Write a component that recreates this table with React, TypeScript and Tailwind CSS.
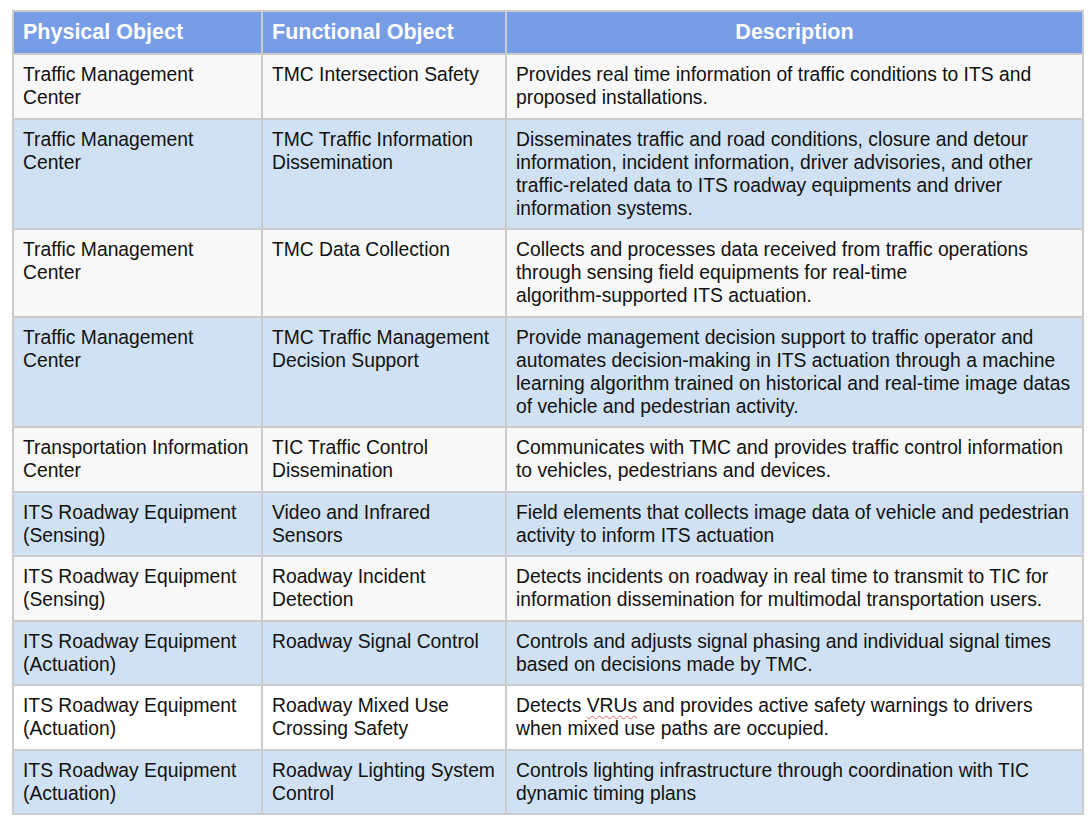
// Tableau des objets physiques / fonctionnels ITS

type Row = {
  physical: string[];
  functional: string[];
  description: React.ReactNode;
  tone: 'gray' | 'blue' | 'white';
};

const rows: Row[] = [
  {
    physical: ['Traffic Management', 'Center'],
    functional: ['TMC Intersection Safety'],
    description: 'Provides real time information of traffic conditions to ITS and proposed installations.',
    tone: 'gray',
  },
  {
    physical: ['Traffic Management', 'Center'],
    functional: ['TMC Traffic Information', 'Dissemination'],
    description:
      'Disseminates traffic and road conditions, closure and detour information, incident information, driver advisories, and other traffic-related data to ITS roadway equipments and driver information systems.',
    tone: 'blue',
  },
  {
    physical: ['Traffic Management', 'Center'],
    functional: ['TMC Data Collection'],
    description: (
      <>
        Collects and processes data received from traffic operations through sensing field equipments for real-time{' '}
        <span className="whitespace-nowrap">algorithm-supported</span> ITS actuation.
      </>
    ),
    tone: 'gray',
  },
  {
    physical: ['Traffic Management', 'Center'],
    functional: ['TMC Traffic Management', 'Decision Support'],
    description:
      'Provide management decision support to traffic operator and automates decision-making in ITS actuation through a machine learning algorithm trained on historical and real-time image datas of vehicle and pedestrian activity.',
    tone: 'blue',
  },
  {
    physical: ['Transportation Information', 'Center'],
    functional: ['TIC Traffic Control', 'Dissemination'],
    description:
      'Communicates with TMC and provides traffic control information to vehicles, pedestrians and devices.',
    tone: 'gray',
  },
  {
    physical: ['ITS Roadway Equipment', '(Sensing)'],
    functional: ['Video and Infrared', 'Sensors'],
    description:
      'Field elements that collects image data of vehicle and pedestrian activity to inform ITS actuation',
    tone: 'blue',
  },
  {
    physical: ['ITS Roadway Equipment', '(Sensing)'],
    functional: ['Roadway Incident', 'Detection'],
    description:
      'Detects incidents on roadway in real time to transmit to TIC for information dissemination for multimodal transportation users.',
    tone: 'gray',
  },
  {
    physical: ['ITS Roadway Equipment', '(Actuation)'],
    functional: ['Roadway Signal Control'],
    description:
      'Controls and adjusts signal phasing and individual signal times based on decisions made by TMC.',
    tone: 'blue',
  },
  {
    physical: ['ITS Roadway Equipment', '(Actuation)'],
    functional: ['Roadway Mixed Use', 'Crossing Safety'],
    description: (
      <>
        Detects{' '}
        <span className="underline decoration-wavy decoration-[#e06666] decoration-1 underline-offset-[3px]">
          VRUs
        </span>{' '}
        and provides active safety warnings to drivers when mixed use paths are occupied.
      </>
    ),
    tone: 'white',
  },
  {
    physical: ['ITS Roadway Equipment', '(Actuation)'],
    functional: ['Roadway Lighting System', 'Control'],
    description: 'Controls lighting infrastructure through coordination with TIC dynamic timing plans',
    tone: 'blue',
  },
];

const toneClass = {
  gray: 'bg-[#f8f8f8]',
  blue: 'bg-[#cfe1f2]',
  white: 'bg-white',
};

const cell = 'border-2 border-[#cbcbcb] px-[9px] pt-[8px] pb-[8.5px] align-top';
const head = 'border-2 border-[#cbcbcb] px-[9px] text-[21.5px] font-bold';

export default function App() {
  return (
    <div className="min-h-[820px] w-[1088px] bg-white pl-[12px] pt-[10px] font-['Liberation_Sans',Arial,sans-serif] text-[19.3px] leading-[23px] text-[#111]">
      <table className="w-[1070px] table-fixed border-collapse border-2 border-[#c3c3c3]">
        <colgroup>
          <col className="w-[249px]" />
          <col className="w-[244px]" />
          <col className="w-[577px]" />
        </colgroup>
        <thead>
          <tr className="h-[43px] bg-[#769de5] text-white">
            <th className={`${head} text-left`}>Physical Object</th>
            <th className={`${head} text-left`}>Functional Object</th>
            <th className={`${head} text-center`}>Description</th>
          </tr>
        </thead>
        <tbody>
          {rows.map((r, i) => (
            <tr key={i} className={toneClass[r.tone]}>
              <td className={cell}>
                {r.physical.map((l) => (
                  <div key={l}>{l}</div>
                ))}
              </td>
              <td className={cell}>
                {r.functional.map((l) => (
                  <div key={l}>{l}</div>
                ))}
              </td>
              <td className={cell}>{r.description}</td>
            </tr>
          ))}
        </tbody>
      </table>
    </div>
  );
}
